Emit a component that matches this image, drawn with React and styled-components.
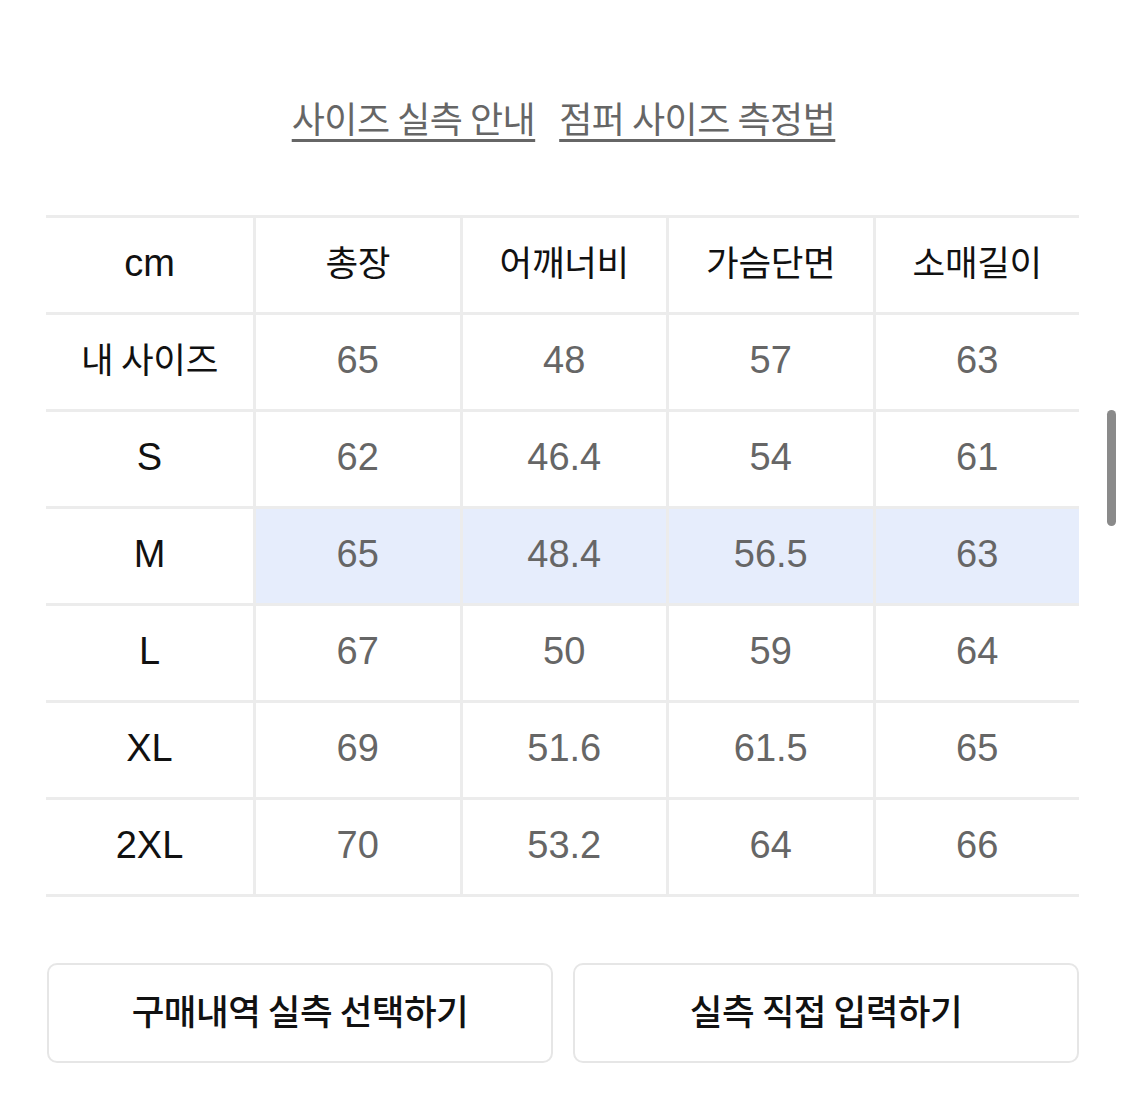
import React from "react";
import styled, { createGlobalStyle } from "styled-components";

const GlobalStyle = createGlobalStyle`
  html, body {
    margin: 0;
    padding: 0;
    background: #fff;
  }
  body {
    font-family: "Liberation Sans", "Noto Sans CJK KR", sans-serif;
    color: #111;
  }
`;

const Page = styled.div`
  position: relative;
  width: 1125px;
  height: 1105px;
  overflow: hidden;
  background: #fff;
`;

const Links = styled.div`
  display: flex;
  justify-content: center;
  align-items: flex-start;
  gap: 24px;
  padding: 92px 0 0 2px;
  height: 215px;
  box-sizing: border-box;
`;

const GuideLink = styled.a`
  font-family: "Noto Sans CJK KR", sans-serif;
  font-size: 36px;
  line-height: 50px;
  color: #666;
  text-decoration: underline;
  text-decoration-thickness: 3px;
  text-underline-offset: 6px;
  text-decoration-color: #666;
  letter-spacing: -0.5px;
`;

const Table = styled.div`
  display: grid;
  grid-template-columns: 207px repeat(4, 1fr);
  width: 1033px;
  margin-left: 46px;
  border-top: 3px solid #ececec;
`;

const Cell = styled.div`
  height: 97px;
  box-sizing: border-box;
  display: flex;
  align-items: center;
  justify-content: center;
  padding-bottom: ${(p) => (p.$ko ? "9px" : "4px")};
  border-bottom: 3px solid #ececec;
  border-left: ${(p) => (p.$first ? "none" : "3px solid #ececec")};
  background: ${(p) => (p.$active && !p.$first ? "#e6edfc" : "#fff")};
  font-family: ${(p) =>
    p.$ko ? '"Noto Sans CJK KR", sans-serif' : '"Liberation Sans", sans-serif'};
  font-size: ${(p) => (p.$ko ? "35.5px" : "38px")};
  color: ${(p) => (p.$dark ? "#111" : "#666")};
  letter-spacing: ${(p) => (p.$ko ? "-0.3px" : "0")};
`;

const Actions = styled.div`
  display: flex;
  gap: 20px;
  margin: 66px 46px 0 47px;
`;

const ActionButton = styled.button`
  flex: 1;
  height: 100px;
  padding: 0 0 8px;
  background: #fff;
  border: 2px solid #e6e6e6;
  border-radius: 10px;
  font-family: "Noto Sans CJK KR", sans-serif;
  font-size: 35.5px;
  font-weight: 500;
  color: #111;
  letter-spacing: -0.5px;
  cursor: pointer;
`;

const ScrollThumb = styled.div`
  position: absolute;
  left: 1107px;
  top: 410px;
  width: 9px;
  height: 116px;
  border-radius: 5px;
  background: #8a8a8a;
`;

const headers = ["cm", "총장", "어깨너비", "가슴단면", "소매길이"];

const rows = [
  ["내 사이즈", "65", "48", "57", "63"],
  ["S", "62", "46.4", "54", "61"],
  ["M", "65", "48.4", "56.5", "63"],
  ["L", "67", "50", "59", "64"],
  ["XL", "69", "51.6", "61.5", "65"],
  ["2XL", "70", "53.2", "64", "66"],
];

const isKorean = (s) => /[\uac00-\ud7a3]/.test(s);

const App = () => (
  <Page>
    <GlobalStyle />
    <Links>
      <GuideLink>사이즈 실측 안내</GuideLink>
      <GuideLink>점퍼 사이즈 측정법</GuideLink>
    </Links>
    <Table>
      {headers.map((h, i) => (
        <Cell key={h} $dark $first={i === 0} $ko={isKorean(h)}>
          {h}
        </Cell>
      ))}
      {rows.map((row) =>
        row.map((v, i) => (
          <Cell
            key={row[0] + i}
            $first={i === 0}
            $dark={i === 0}
            $ko={isKorean(v)}
            $active={row[0] === "M"}
          >
            {v}
          </Cell>
        ))
      )}
    </Table>
    <Actions>
      <ActionButton>구매내역 실측 선택하기</ActionButton>
      <ActionButton>실측 직접 입력하기</ActionButton>
    </Actions>
    <ScrollThumb />
  </Page>
);

export default App;
